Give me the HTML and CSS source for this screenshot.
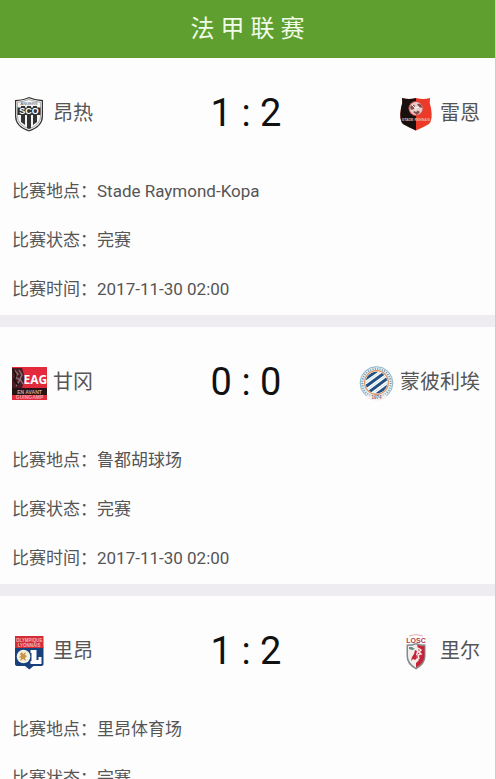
FILE: index.html
```html
<!DOCTYPE html>
<html lang="zh-CN">
<head>
<meta charset="utf-8">
<meta name="viewport" content="width=device-width, initial-scale=1">
<title>法甲联赛</title>
<link rel="stylesheet" href="styles.css">
</head>
<body>
<header class="topbar"><h1 class="title">法 甲 联 赛</h1></header>
<main class="matches">
  <article class="match">
    <div class="teams">
      <div class="team">
        <svg class="crest" viewBox="0 0 35 36" aria-hidden="true">
          <path d="M17 1 Q24 4 31 4 V20 Q31 31 17 35.500 Q3 31 3 20 V4 Q11 4 17 1Z" fill="#333"/>
          <path d="M17 2.300 Q24 5 29.800 5.200 V20 Q29.800 30 17 34.200 Q4.200 30 4.200 20 V5.200 Q11 5 17 2.300Z" fill="#f4f4f4"/>
          <path d="M17 3.500 Q24 6 28.600 6.300 V20 Q28.600 29 17 32.800 Q5.400 29 5.400 20 V6.300 Q11 6 17 3.500Z" fill="none" stroke="#777" stroke-width=".6"/>
          <path d="M9 10h4v19l-4-3zM15 10h4v22l-2 1-2-1zM21 10h4v16l-4 3z" fill="#333"/>
          <path d="M5.500 11.500h23v7.500h-23z" fill="#333"/>
          <text x="17" y="9" class="mark" font-size="4" fill="#555">ANGERS</text>
          <text x="17" y="18.300" class="mark bold" font-size="9" fill="#fff">SCO</text>
        </svg>
        <span class="name">昂热</span>
      </div>
      <div class="score">1 : 2</div>
      <div class="team away">
        <svg class="crest" viewBox="0 0 35 36" aria-hidden="true">
          <path d="M3 2 Q10 4 17 2 Q24 4 31 2 Q30 7 32 12 Q34 24 30 28 Q25 31 17 34.500 Q9 31 4 28 Q0 24 2 12 Q4 7 3 2Z" fill="#ed3a28"/>
          <path d="M3 2 Q10 4 17 2 V34.500 Q9 31 4 28 Q0 24 2 12 Q4 7 3 2Z" fill="#16100f"/>
          <circle cx="17" cy="12.500" r="7.500" fill="#d94a46"/>
          <circle cx="17" cy="12.500" r="6.500" fill="#e7cfcb"/>
          <path d="M11 11q3-4 5-1l-1 3-3 1zM18 8q5-1 5 4l-3-1zM14 16q4-3 7 0l-3 3z" fill="#8a4a48"/>
          <path d="M13 9l3 3 4-1M17 13v3" stroke="#fff" fill="none"/>
          <text x="17" y="24.500" class="mark bold" font-size="3.500" fill="#e4b6a8">STADE RENNAIS</text>
        </svg>
        <span class="name">雷恩</span>
      </div>
    </div>
    <dl class="details">
      <div class="row"><dt>比赛地点：</dt><dd>Stade Raymond-Kopa</dd></div>
      <div class="row"><dt>比赛状态：</dt><dd>完赛</dd></div>
      <div class="row"><dt>比赛时间：</dt><dd>2017-11-30 02:00</dd></div>
    </dl>
  </article>
  <article class="match">
    <div class="teams">
      <div class="team">
        <svg class="crest" viewBox="0 0 35 36" aria-hidden="true">
          <path d="M0 2h35v33H0z" fill="#e3293c"/>
          <path d="M0 23h35v7H0z" fill="#261315"/>
          <path d="M0 3h10l3 10-3 10H0z" fill="#4a1d24"/>
          <path d="M2 5l4 4-3 3 5 3-4 6M7 5l3 5-2 4 3 5" fill="none" stroke="#8d7376" stroke-width="1.400"/>
          <path d="M1 4l3 6-2 5 4 5" fill="none" stroke="#160d10" stroke-width="1.500"/>
          <text x="23.300" y="18.500" class="mark narrow" font-size="15" fill="#fff">EAG</text>
          <text x="17.500" y="28.500" class="mark bold" font-size="5" fill="#c9a6a0">EN AVANT</text>
          <text x="17.500" y="34" class="mark bold" font-size="5" fill="#f3a9ae">GUINGAMP</text>
        </svg>
        <span class="name">甘冈</span>
      </div>
      <div class="score">0 : 0</div>
      <div class="team away">
        <svg class="crest" viewBox="0 0 35 36" aria-hidden="true">
          <circle cx="17.500" cy="18" r="17" fill="#e4eff3"/>
          <circle cx="17.500" cy="18" r="16.300" fill="none" stroke="#91b8ca" stroke-width="1"/>
          <circle cx="17.500" cy="18" r="14.200" fill="none" stroke="#7599ac" stroke-width="2" stroke-dasharray="1 1.400"/>
          <circle cx="17.500" cy="17.500" r="11.800" fill="#fff" stroke="#df8a54" stroke-width="1.200"/>
          <clipPath id="disc"><circle cx="17.500" cy="17.500" r="10.800"/></clipPath>
          <g clip-path="url(#disc)">
            <path d="M2 17L22 3M2 25L28 6M6 30L33 10M14 32L34 17" stroke="#234e80" stroke-width="3"/>
            <path d="M2 21L25 4.500M4 28L30 8M10 31L34 13.500" stroke="#a9d2ec" stroke-width=".7"/>
          </g>
          <path d="M7 29q10 5 21 0l-2 5q-8 3-17 0z" fill="#f4eeee"/>
          <text x="17.500" y="34" class="mark bold" font-size="4.500" fill="#846c7b">1974</text>
        </svg>
        <span class="name">蒙彼利埃</span>
      </div>
    </div>
    <dl class="details">
      <div class="row"><dt>比赛地点：</dt><dd>鲁都胡球场</dd></div>
      <div class="row"><dt>比赛状态：</dt><dd>完赛</dd></div>
      <div class="row"><dt>比赛时间：</dt><dd>2017-11-30 02:00</dd></div>
    </dl>
  </article>
  <article class="match">
    <div class="teams">
      <div class="team">
        <svg class="crest" viewBox="0 0 35 36" aria-hidden="true">
          <path d="M3 13h28.500v17q0 2-3 2h-7l-4.200 3.500L13 32H6q-3 0-3-2z" fill="#17417c"/>
          <path d="M3 2h28.500v12H3z" fill="#d32c37"/>
          <text x="17.200" y="7.500" class="mark bold" font-size="4.500" fill="#f4b9b6">OLYMPIQUE</text>
          <text x="17.200" y="12.500" class="mark bold" font-size="4.500" fill="#f4b9b6">LYONNAIS</text>
          <circle cx="11.500" cy="22.500" r="6.800" fill="#f5efdf"/>
          <path d="M8 20l2-2 1 2 3-2-1 3 2 1-2 2 1 3-3-2-3 2 1-3-2-1 2-1z" fill="#c59548"/>
          <path d="M18.500 16h6v10h2v-3h3v7h-11v-3h1V19h-1z" fill="#fff"/>
        </svg>
        <span class="name">里昂</span>
      </div>
      <div class="score">1 : 2</div>
      <div class="team away">
        <svg class="crest" viewBox="0 0 35 36" aria-hidden="true">
          <path d="M10 2q7-3 14 0" fill="none" stroke="#deb0af" stroke-width="1"/>
          <text x="17" y="8.500" class="mark bold" font-size="7" fill="#b63a45">LOSC</text>
          <path d="M7.500 10.500q5 0 9.500-1.500 5 1.500 9.500 1.500v12q0 8-9.500 13-9.500-5-9.500-13z" fill="#858a8b"/>
          <path d="M9 12q4 0 8-1.500 4 1.500 8 1.500v10q0 7-8 11.800Q9 29 9 22z" fill="#f1efed"/>
          <path d="M18 10.800q4 1.200 7.500 1.200v10q0 7-8.500 11.800V29l3-3-3-4 3-4z" fill="#c72439"/>
          <path d="M10 13h3l3 2-3 1-3-1z" fill="#698c80"/>
          <path d="M16 16l2 1-1 4 1 3-2 2-2-1-2 2 1-4 2-3z" fill="#c72439"/>
          <path d="M19 14l3 2-2 2 2 2-3 1 1 4" fill="none" stroke="#f7eae7" stroke-width="1.500"/>
        </svg>
        <span class="name">里尔</span>
      </div>
    </div>
    <dl class="details">
      <div class="row"><dt>比赛地点：</dt><dd>里昂体育场</dd></div>
      <div class="row"><dt>比赛状态：</dt><dd>完赛</dd></div>
    </dl>
  </article>
</main>
</body>
</html>
```
FILE: styles.css
```css
* {
  box-sizing: border-box;
}

body {
  display: flex;
  flex-direction: column;
  height: 100vh;
  margin: 0;
  border-right: 1px solid #cfcbd0;
  background: #fefdfe;
  color: #555;
  font-family: Roboto, "Noto Sans CJK SC", sans-serif;
}

.topbar {
  flex: none;
  display: flex;
  justify-content: center;
  padding: 13px 0;
  background: #5f9f2f;
}

.title {
  margin: 0;
  color: #f0fbe8;
  font-size: 24px;
  font-weight: 400;
  line-height: 32px;
}

.matches {
  flex: 1;
  min-height: 0;
  overflow-y: auto;
  scrollbar-width: none;
}

.match {
  padding: 1px 15px 1px 12px;
  border-bottom: 12px solid #eeecf0;
}

.teams {
  display: grid;
  grid-template-columns: 1fr auto 1fr;
  align-items: center;
  height: 108px;
}

.team {
  display: flex;
  align-items: center;
  gap: 6px;
}

.away {
  justify-content: flex-end;
}

.crest {
  flex: none;
  width: 35px;
  height: 36px;
  margin-top: 2px;
}

.mark {
  font-family: "Liberation Sans", sans-serif;
  text-anchor: middle;
}

.bold {
  font-weight: 700;
}

.narrow {
  font-family: "Open Sans", sans-serif;
  font-size: 12px;
  font-weight: 700;
}

.name {
  font-size: 20px;
  line-height: 28px;
}

.score {
  color: #111;
  font-size: 38px;
  line-height: 48px;
}

.details {
  margin: 0;
  font-size: 17px;
  line-height: 49px;
}

.row {
  display: flex;
}

.row dd {
  margin: 0;
}
```
